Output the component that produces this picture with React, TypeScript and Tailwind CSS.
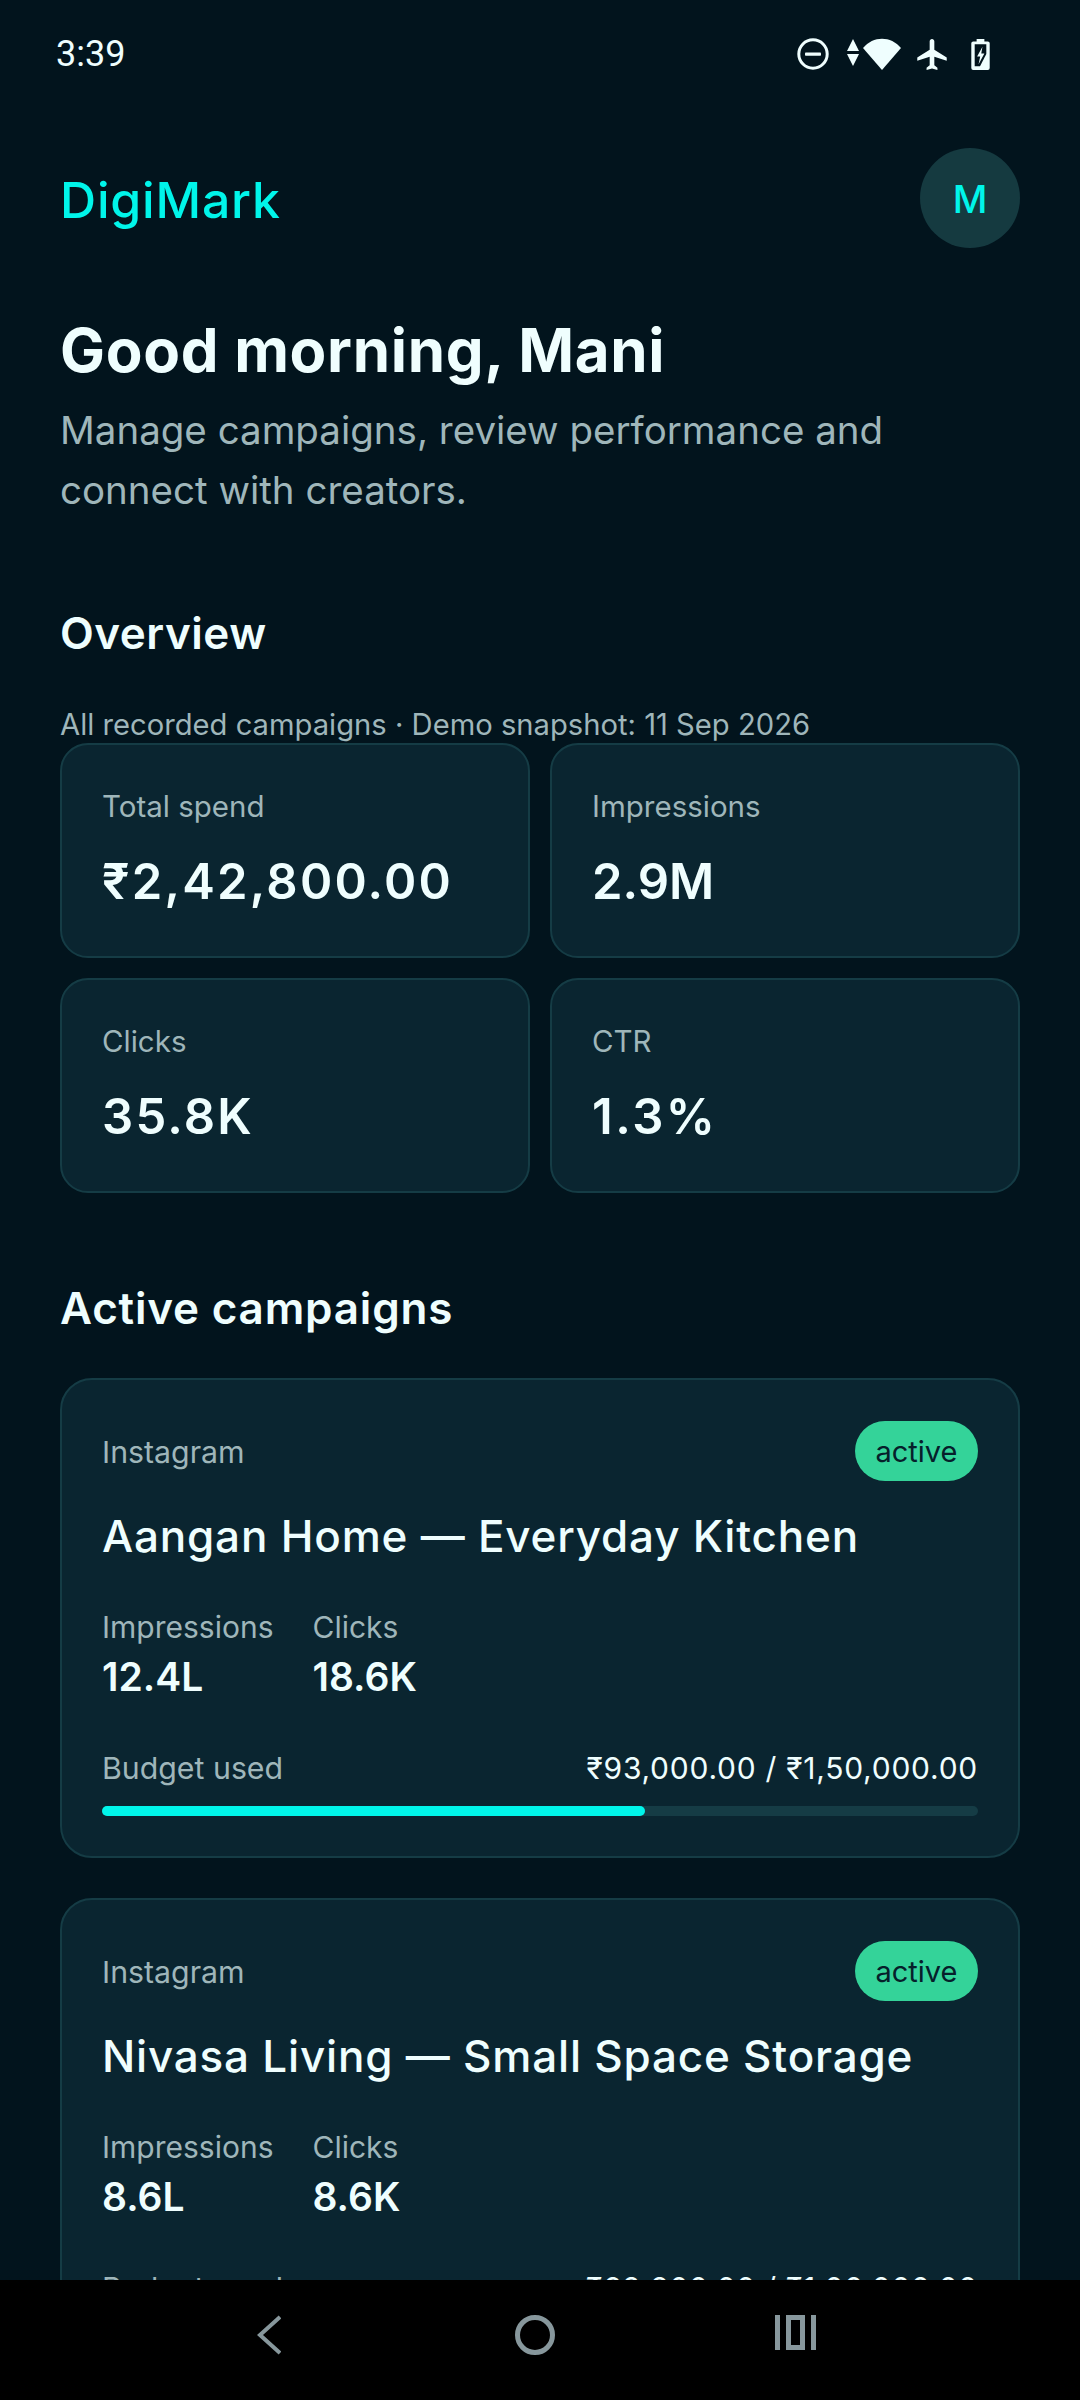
import React from "react";

function Stat({ label, value, track }: { label: string; value: string; track: string }) {
  return (
    <div className="h-[215px] rounded-[28px] border-2 border-[#153c45] bg-[#0a2530] px-[40px] pt-[43px]">
      <div className="text-[29.500px] leading-[36px] text-[#9fb6ba]">{label}</div>
      <div className={`mt-[29px] text-[49px] leading-[58px] font-semibold text-[#effefe] ${track}`}>{value}</div>
    </div>
  );
}

function Campaign({ title, imp, clicks, used, pct }: { title: string; imp: string; clicks: string; used: string; pct: number }) {
  return (
    <div className="h-[480px] shrink-0 rounded-[32px] border-2 border-[#153c45] bg-[#0a2530] px-[40px] pt-[41px]">
      <div className="flex h-[60px] items-center justify-between">
        <span className="pt-[3px] text-[30.300px] text-[#9fb6ba]">Instagram</span>
        <span className="flex h-[60px] w-[123px] items-center justify-center rounded-full bg-[#34d399] pt-[2px] text-[29px] text-[#06202b]">active</span>
      </div>
      <div className="mt-[27px] text-[44px] leading-[56px] font-medium tracking-[0.8px] text-[#effefe]">{title}</div>
      <div className="mt-[44px] flex gap-[39px]">
        <div>
          <div className="text-[30px] leading-[38px] text-[#9fb6ba]">Impressions</div>
          <div className="mt-[7px] text-[39px] leading-[48px] font-semibold text-[#effefe]">{imp}</div>
        </div>
        <div>
          <div className="text-[30px] leading-[38px] text-[#9fb6ba]">Clicks</div>
          <div className="mt-[7px] text-[39px] leading-[48px] font-semibold text-[#effefe]">{clicks}</div>
        </div>
      </div>
      <div className="mt-[47px] flex items-center justify-between">
        <span className="text-[30.300px] leading-[40px] text-[#9fb6ba]">Budget used</span>
        <span className="text-[30px] leading-[40px] tracking-[0.75px] text-[#effefe]">{used}</span>
      </div>
      <div className="mt-[18px] h-[10px] rounded-full bg-[#153c45]">
        <div className="h-full rounded-full bg-[#00f5ea]" style={{ width: `${pct}%` }} />
      </div>
    </div>
  );
}

function StatusIcons() {
  return (
    <div className="mr-[90px] flex items-center text-[#effefe]">
      <svg width="32" height="32" viewBox="0 0 32 32" className="mr-[18px]">
        <circle cx="16" cy="16" r="14.200" fill="none" stroke="currentColor" strokeWidth="3" />
        <rect x="8" y="14.500" width="16" height="3.200" rx="0.800" fill="currentColor" />
      </svg>
      <svg width="12" height="27" viewBox="0 0 12 27" className="-mt-[4px]">
        <path d="M6 0 L12 12 H0 Z M6 27 L0 15 H12 Z" fill="currentColor" />
      </svg>
      <svg width="38" height="32" viewBox="0 0 38 32" className="ml-[4px] mr-[16px]">
        <path d="M0 10 C10 -2.500 28 -2.500 38 10 L19 32 Z" fill="currentColor" />
      </svg>
      <svg width="30" height="31" viewBox="2 2 19 20" className="mr-[24px]">
        <path d="M21 16v-2l-8-5V3.500c0-.83-.67-1.500-1.500-1.500S10 2.670 10 3.500V9l-8 5v2l8-2.500V19l-2 1.500V22l3.500-1 3.500 1v-1.500L13 19v-5.500l8 2.500z" fill="currentColor" />
      </svg>
      <svg width="19" height="31" viewBox="0 0 19 32">
        <path d="M5.500 0h8v2.500H17a2 2 0 0 1 2 2V30a2 2 0 0 1-2 2H2a2 2 0 0 1-2-2V4.500a2 2 0 0 1 2-2h3.500z" fill="currentColor" />
        <path d="M3.500 5.500h12v10L9 28H3.500z" fill="#02141d" />
        <path d="M11.500 8 6 18h3.200L7.500 26 13.500 15h-3.200z" fill="currentColor" />
      </svg>
    </div>
  );
}

export default function App() {
  return (
    <div className="flex h-[2400px] w-[1080px] flex-col overflow-hidden bg-[#02141d] font-['Inter','Liberation_Sans',sans-serif]">
      <div className="flex min-h-0 flex-1 flex-col overflow-hidden">
        <div className="flex h-[106px] shrink-0 items-center justify-between pl-[56px] pt-[2px]">
          <span className="font-['Roboto',sans-serif] text-[36px] text-[#effefe]">3:39</span>
          <StatusIcons />
        </div>
        <div className="mt-[42px] flex h-[100px] shrink-0 items-center justify-between px-[60px]">
          <span className="pt-[4px] text-[50px] font-medium tracking-[0.8px] text-[#00f5ea]">DigiMark</span>
          <span className="flex h-[100px] w-[100px] items-center justify-center rounded-full bg-[#153a40] pt-[2px] text-[38px] font-medium text-[#00f5ea]">M</span>
        </div>
        <div className="shrink-0 px-[60px]">
          <div className="mt-[62px] text-[60px] leading-[80px] font-bold tracking-[0.7px] text-[#effefe]">Good morning, Mani</div>
          <div className="mt-[10px] text-[38.500px] leading-[60px] text-[#9fb6ba]">Manage campaigns, review performance and connect with creators.</div>
          <div className="mt-[83px] text-[44px] leading-[60px] font-semibold tracking-[0.5px] text-[#effefe]">Overview</div>
          <div className="mt-[44px] text-[29.200px] leading-[36px] text-[#9fb6ba]">All recorded campaigns · Demo snapshot: 11 Sep 2026</div>
          <div className="grid grid-cols-2 gap-[20px]">
            <Stat label="Total spend" value="₹2,42,800.00" track="tracking-[2.200px]" />
            <Stat label="Impressions" value="2.9M" track="tracking-[0px]" />
            <Stat label="Clicks" value="35.8K" track="tracking-[2.200px]" />
            <Stat label="CTR" value="1.3%" track="tracking-[2.500px]" />
          </div>
          <div className="mt-[85px] text-[44px] leading-[60px] font-semibold tracking-[0.8px] text-[#effefe]">Active campaigns</div>
          <div className="mt-[40px] flex flex-col gap-[40px]">
            <Campaign title="Aangan Home — Everyday Kitchen" imp="12.4L" clicks="18.6K" used="₹93,000.00 / ₹1,50,000.00" pct={62} />
            <Campaign title="Nivasa Living — Small Space Storage" imp="8.6L" clicks="8.6K" used="₹62,800.00 / ₹1,00,000.00" pct={62.8} />
          </div>
        </div>
      </div>
      <div className="flex h-[120px] shrink-0 items-start bg-black text-[#87979c]">
        <svg width="24" height="40" viewBox="0 0 24 40" className="ml-[257px] mt-[35px]">
          <path d="M23 2 L3 20 L23 38" fill="none" stroke="currentColor" strokeWidth="4" />
        </svg>
        <svg width="40" height="40" viewBox="0 0 40 40" className="ml-[234px] mt-[35px]">
          <circle cx="20" cy="20" r="17.500" fill="none" stroke="currentColor" strokeWidth="5" />
        </svg>
        <svg width="41" height="36" viewBox="0 0 41 36" className="ml-[220px] mt-[35px]">
          <path fillRule="evenodd" d="M0 0h5v35H0zM36 0h5v35h-5zM11 0h19v35H11zM16 5v25h9V5z" fill="currentColor" />
        </svg>
      </div>
    </div>
  );
}
